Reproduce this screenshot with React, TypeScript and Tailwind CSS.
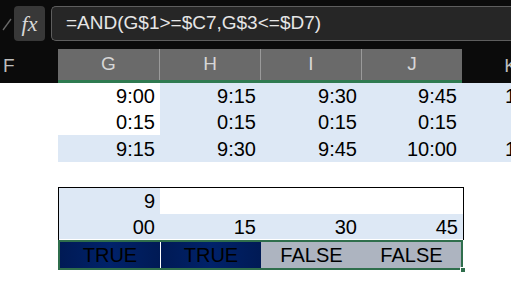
import React from 'react';

const BLUE = 'bg-[#dde8f5]';

function Cell({ w, bg = 'bg-white', children }: { w: string; bg?: string; children?: React.ReactNode }) {
  return (
    <div className={`${w} ${bg} h-full flex items-center justify-end pr-[5px] shrink-0`}>{children}</div>
  );
}

export default function App() {
  return (
    <div
      className="w-[511px] h-[306px] overflow-hidden bg-white text-[20px] text-black"
      style={{ fontFamily: '"Liberation Sans", Arial, sans-serif' }}
    >
      {/* formula bar */}
      <div className="h-[49px] bg-[#0b0b0b] flex items-start pt-[6px]">
        <div className="w-[14px] h-[35px] flex items-center justify-center">
          <svg width="10" height="14" viewBox="0 0 10 14">
            <path d="M1 13 L9 2" stroke="#6a6a6a" strokeWidth="1.3" fill="none" />
          </svg>
        </div>
        <div className="w-[31px] h-[35px] rounded-[4px] bg-[#383838] flex items-center justify-center">
          <span
            className="italic text-[#d8d8d8] text-[22px] leading-none"
            style={{ fontFamily: '"Liberation Serif", "Times New Roman", serif' }}
          >
            fx
          </span>
        </div>
        <div className="ml-[6px] flex-1 h-[35px] rounded-l-[5px] border border-r-0 border-[#5e5e5e] bg-[#262626] flex items-center pl-[14px] text-[#e6e6e6] text-[19px]">
          =AND(G$1&gt;=$C7,G$3&lt;=$D7)
        </div>
      </div>

      {/* column headers */}
      <div className="h-[34px] flex bg-[#0b0b0b] text-[19px] text-[#d6d6d6]">
        <div className="w-[58px] flex items-center pl-[3px] text-[#bdbdbd]">F</div>
        <div className="flex border-b-[3px] border-[#2f7a50] bg-[#6a6a6a]">
          <div className="w-[102px] flex items-center justify-center border-r border-[#9a9a9a]">G</div>
          <div className="w-[101px] flex items-center justify-center border-r border-[#9a9a9a]">H</div>
          <div className="w-[101px] flex items-center justify-center border-r border-[#9a9a9a]">I</div>
          <div className="w-[100px] flex items-center justify-center">J</div>
        </div>
        <div className="flex-1 flex items-center justify-end text-[#bdbdbd]">
          <span className="mr-[-6px]">K</span>
        </div>
      </div>

      {/* rows 1-3 */}
      <div className="h-[26px] flex">
        <Cell w="w-[58px]" />
        <Cell w="w-[102px]">9:00</Cell>
        <Cell w="w-[101px]" bg={BLUE}>9:15</Cell>
        <Cell w="w-[101px]" bg={BLUE}>9:30</Cell>
        <Cell w="w-[100px]" bg={BLUE}>9:45</Cell>
        <Cell w="flex-1" bg={BLUE}><span className="mr-[-10px]">1</span></Cell>
      </div>
      <div className="h-[26px] flex">
        <Cell w="w-[58px]" />
        <Cell w="w-[102px]">0:15</Cell>
        <Cell w="w-[101px]" bg={BLUE}>0:15</Cell>
        <Cell w="w-[101px]" bg={BLUE}>0:15</Cell>
        <Cell w="w-[100px]" bg={BLUE}>0:15</Cell>
        <Cell w="flex-1" bg={BLUE} />
      </div>
      <div className="h-[27px] flex">
        <Cell w="w-[58px]" />
        <Cell w="w-[102px]" bg={BLUE}>9:15</Cell>
        <Cell w="w-[101px]" bg={BLUE}>9:30</Cell>
        <Cell w="w-[101px]" bg={BLUE}>9:45</Cell>
        <Cell w="w-[100px]" bg={BLUE}>10:00</Cell>
        <Cell w="flex-1" bg={BLUE}><span className="mr-[-10px]">1</span></Cell>
      </div>

      {/* blank row */}
      <div className="h-[25px]" />

      {/* bordered table */}
      <div className="flex">
        <div className="w-[58px] shrink-0" />
        <div className="flex flex-col">
          <div className="flex border-t border-l border-black">
            <div className="w-[404px] flex flex-col">
              <div className="h-[26px] flex">
                <Cell w="w-[101px]" bg={BLUE}>9</Cell>
                <Cell w="w-[303px]" />
              </div>
              <div className="h-[25px] flex">
                <Cell w="w-[101px]" bg={BLUE}>00</Cell>
                <Cell w="w-[101px]" bg={BLUE}>15</Cell>
                <Cell w="w-[101px]" bg={BLUE}>30</Cell>
                <Cell w="w-[101px]" bg={BLUE}>45</Cell>
              </div>
            </div>
            <div className={`flex-1 h-[52px] ${BLUE} border-l border-b border-black`} />
          </div>
          {/* selected result row */}
          <div className="relative w-[405px] h-[30px] border-2 border-[#2f6e4c] flex">
            <div className="w-[100px] flex items-center justify-center bg-gradient-to-r from-[#001a55] via-[#00226a] to-[#001a55]">TRUE</div>
            <div className="w-[101px] flex items-center justify-center border-l border-white bg-gradient-to-r from-[#001a55] via-[#00226a] to-[#001a55]">TRUE</div>
            <div className="w-[101px] flex items-center justify-center bg-[#adb4c0]">FALSE</div>
            <div className="flex-1 flex items-center justify-center bg-[#adb4c0]">FALSE</div>
            <div className="absolute right-[-5px] bottom-[-5px] w-[6px] h-[6px] bg-[#2f6e4c] border border-white" />
          </div>
        </div>
      </div>
    </div>
  );
}
